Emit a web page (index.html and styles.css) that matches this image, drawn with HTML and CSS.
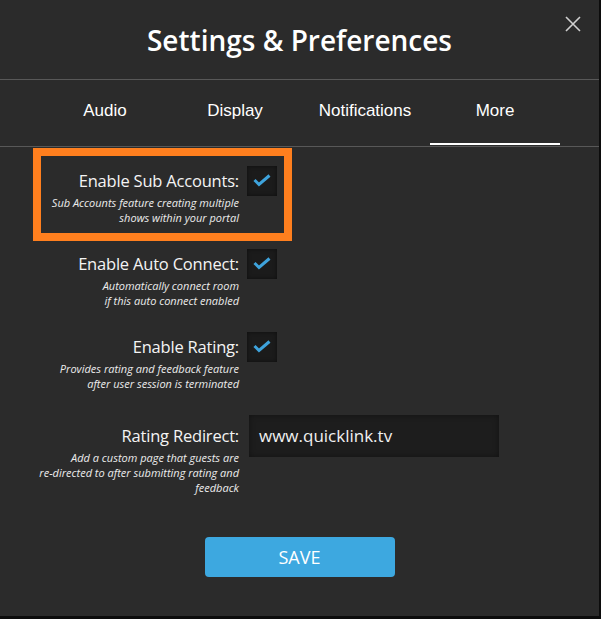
FILE: index.html
```html
<!DOCTYPE html>
<html>
<head>
<meta charset="utf-8">
<link rel="stylesheet" href="styles.css">
</head>
<body>
<div class="modal">
  <header class="head">
    <h1 class="title">Settings &amp; Preferences</h1>
    <button class="close" aria-label="Close">
      <svg width="16" height="16" viewBox="0 0 16 16"><path d="M1 1 L15 15 M15 1 L1 15" stroke="#cfcfcf" stroke-width="1.6" fill="none"/></svg>
    </button>
  </header>
  <nav class="tabs">
    <div class="tab">Audio</div>
    <div class="tab">Display</div>
    <div class="tab">Notifications</div>
    <div class="tab active">More</div>
  </nav>
  <section class="content">
    <div class="row highlight">
      <div class="lbl">
        <div class="name">Enable Sub Accounts:</div>
        <div class="desc">Sub Accounts feature creating multiple<br>shows within your portal</div>
      </div>
      <div class="check"><svg width="30" height="30" viewBox="0 0 30 30"><path d="M7.5 14 L12 18.5 L22.5 9.5" stroke="#3ea3dc" stroke-width="3" fill="none"/></svg></div>
    </div>
    <div class="row">
      <div class="lbl">
        <div class="name">Enable Auto Connect:</div>
        <div class="desc">Automatically connect room<br>if this auto connect enabled</div>
      </div>
      <div class="check"><svg width="30" height="30" viewBox="0 0 30 30"><path d="M7.5 14 L12 18.5 L22.5 9.5" stroke="#3ea3dc" stroke-width="3" fill="none"/></svg></div>
    </div>
    <div class="row">
      <div class="lbl">
        <div class="name">Enable Rating:</div>
        <div class="desc">Provides rating and feedback feature<br>after user session is terminated</div>
      </div>
      <div class="check"><svg width="30" height="30" viewBox="0 0 30 30"><path d="M7.5 14 L12 18.5 L22.5 9.5" stroke="#3ea3dc" stroke-width="3" fill="none"/></svg></div>
    </div>
    <div class="row last">
      <div class="lbl">
        <div class="name tall">Rating Redirect:</div>
        <div class="desc">Add a custom page that guests are<br>re-directed to after submitting rating and<br>feedback</div>
      </div>
      <div class="field">www.quicklink.tv</div>
    </div>
    <div class="actions">
      <button class="save">SAVE</button>
    </div>
  </section>
</div>
</body>
</html>
```
FILE: styles.css
```css
html, body {
  margin: 0;
  padding: 0;
  background: #0c0c0c;
}
body {
  width: 601px;
  height: 619px;
  overflow: hidden;
}
.modal {
  width: 599px;
  height: 616px;
  background: #2b2b2b;
  font-family: "Open Sans", "Noto Sans", sans-serif;
  color: #f2f2f2;
}
.head {
  position: relative;
  height: 79px;
  border-bottom: 1px solid #585858;
  display: flex;
  justify-content: center;
  align-items: center;
}
.title {
  margin: 0;
  font-size: 28px;
  font-weight: 600;
  color: #ffffff;
  padding-top: 1px;
}
.close {
  position: absolute;
  top: 16px;
  right: 18px;
  background: none;
  border: 0;
  padding: 0;
  width: 16px;
  height: 16px;
  display: block;
}
.close svg { display: block; }
.tabs {
  display: flex;
  padding-left: 40px;
  padding-bottom: 1px;
  border-bottom: 1px solid #585858;
}
.tab {
  width: 130px;
  height: 65px;
  padding-bottom: 2px;
  box-sizing: border-box;
  border-bottom: 2px solid transparent;
  display: flex;
  align-items: center;
  justify-content: center;
  font-family: "Liberation Sans", Arial, sans-serif;
  font-size: 17px;
  color: #ffffff;
}
.tab.active {
  border-bottom-color: #ffffff;
}
.content {
  padding: 19px 0 0 38px;
}
.row {
  position: relative;
  display: flex;
  align-items: flex-start;
  height: 83px;
}
.row.last {
  height: auto;
}
.highlight::after {
  content: "";
  position: absolute;
  left: -5px;
  top: -18px;
  width: 243px;
  height: 77px;
  border: 8px solid #ff7f1e;
}
.lbl {
  width: 201px;
  text-align: right;
  margin-right: 8px;
  white-space: nowrap;
}
.name {
  font-size: 16.5px;
  line-height: 28px;
  font-weight: 400;
  color: #f4f4f4;
  letter-spacing: -0.2px;
  padding-top: 1px;
}
.name.tall {
  padding-top: 7px;
}
.desc {
  font-size: 11px;
  line-height: 15px;
  font-style: italic;
  color: #ececec;
}
.check {
  width: 30px;
  height: 30px;
  background: #1b1b1b;
  box-shadow: inset 0 0 4px rgba(0,0,0,0.5);
}
.check svg { display: block; }
.field {
  margin-left: 2px;
  width: 240px;
  height: 42px;
  padding-left: 10px;
  background: #1d1d1d;
  box-shadow: inset 0 0 6px rgba(0,0,0,0.4);
  font-size: 17px;
  line-height: 42px;
  color: #f0f0f0;
}
.actions {
  display: flex;
  justify-content: center;
  padding-right: 38px;
  margin-top: 42px;
}
.save {
  width: 190px;
  height: 40px;
  border: 0;
  border-radius: 4px;
  background: #3da8e0;
  color: #ffffff;
  font-family: "Open Sans", "Noto Sans", sans-serif;
  font-size: 18px;
  padding: 0;
}
```
